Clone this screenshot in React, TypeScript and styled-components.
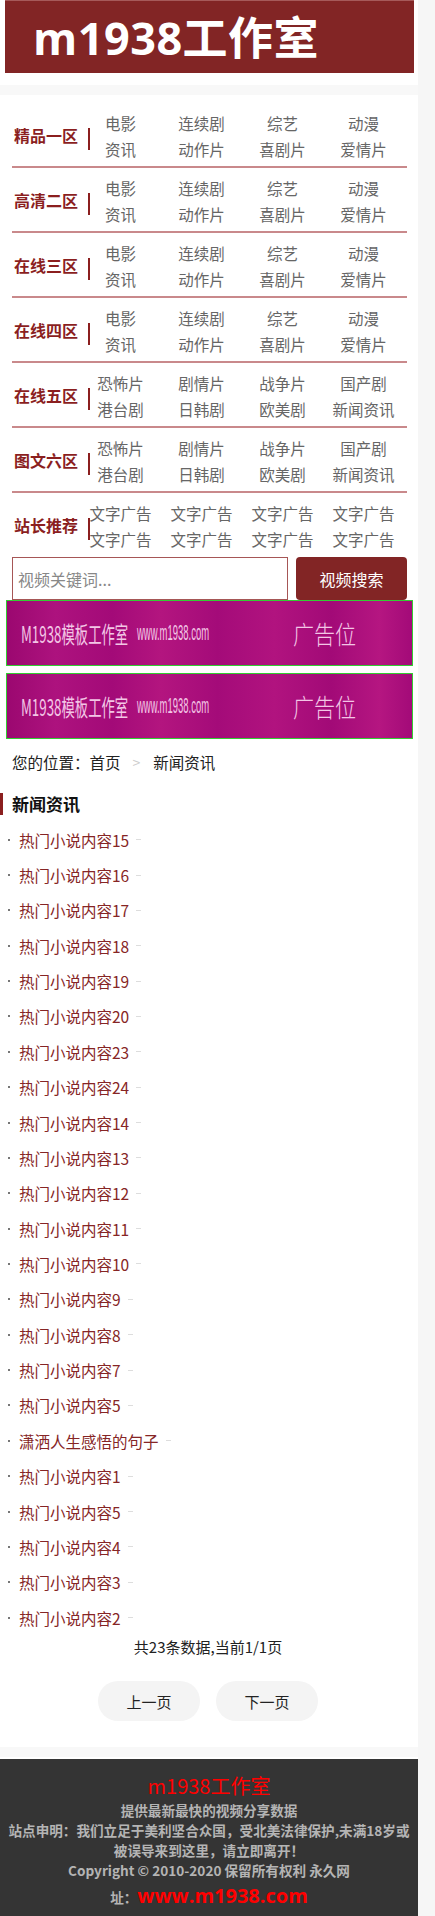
import React from 'react';
import styled, { createGlobalStyle } from 'styled-components';

const GlobalStyle = createGlobalStyle`
  html, body {
    margin: 0;
    padding: 0;
    background: #f6f6f6;
  }
  body {
    font-family: "Noto Sans CJK SC", "Noto Sans", sans-serif;
    color: #333;
  }
  * { box-sizing: border-box; }
  ul { margin: 0; padding: 0; list-style: none; }
`;

const Page = styled.div`
  width: 418px;
  background: #fff;
  min-height: 1916px;
  display: flex;
  flex-direction: column;
`;

const Header = styled.header`
  margin: 0 4px 0 5px;
  height: 73px;
  background: #822525;
  border-top: 1px solid #a65a5a;
  display: flex;
  align-items: center;
  padding-left: 28px;
`;

const Logo = styled.h1`
  margin: 0;
  color: #fff;
  font-family: "Open Sans", "Noto Sans CJK SC", sans-serif;
  font-weight: 700;
  font-size: 45px;
  line-height: 1;
  letter-spacing: 0.5px;
`;

const Band = styled.div`
  height: 10px;
  margin-top: ${p => p.$top || 12}px;
  background: #f8f8f8;
`;

const Nav = styled.nav`
  padding: 8px 11px 0 12px;
`;

const NavRow = styled.div`
  display: flex;
  align-items: center;
  height: ${p => (p.$last ? 63 : 65)}px;
  border-bottom: ${p => (p.$last ? 'none' : '2px solid #c9898b')};
`;

const Label = styled.div`
  position: relative;
  width: 68px;
  padding-left: 2px;
  font-weight: 700;
  font-size: 16px;
  color: #8b1f1f;
  white-space: nowrap;

  &::after {
    content: '';
    position: absolute;
    left: 76px;
    top: calc(50% - 7px);
    width: 2px;
    height: 22px;
    background: #8b1f1f;
  }
`;

const Links = styled.div`
  flex: 1;
  display: grid;
  grid-template-columns: repeat(4, 81px);
  grid-auto-rows: 26px;
  padding-top: 2px;
`;

const NavLink = styled.a`
  text-align: center;
  font-size: 15.5px;
  line-height: 26px;
  color: #666;
  text-decoration: none;
  white-space: nowrap;
`;

const SearchBar = styled.form`
  display: flex;
  gap: 8px;
  padding: 0 11px 0 12px;
  margin-top: 1px;
`;

const SearchInput = styled.input`
  width: 276px;
  height: 43px;
  border: 1px solid #a65656;
  padding: 0 4px 0 5px;
  font-family: "Noto Sans CJK SC", sans-serif;
  font-size: 16px;
  outline: none;
  &::placeholder { color: #888; }
`;

const SearchButton = styled.button`
  width: 111px;
  height: 43px;
  border: none;
  border-radius: 4px;
  background: #822525;
  color: #fff;
  font-family: "Noto Sans CJK SC", sans-serif;
  font-size: 16px;
`;

const Banner = styled.div`
  margin: ${p => p.$gap}px 5px 0 6px;
  height: 66px;
  border: 1px solid #33cc33;
  background: linear-gradient(90deg, #9b0870 0%, #ad127e 12%, #a30a78 26%, #b3157f 38%,
    #a40b79 52%, #b1137f 66%, #a20a77 80%, #b51681 92%, #a30a78 100%);
  display: flex;
  align-items: center;
  color: #f3c6e6;
  white-space: nowrap;
  overflow: hidden;
`;

/* the banner art uses a condensed face, so squeeze the glyphs horizontally */
const BannerBrand = styled.span`
  display: inline-block;
  margin-left: 14px;
  width: 104px;
  font-size: 23px;
  transform: scaleX(0.58);
  transform-origin: left center;
`;

const BannerUrl = styled.span`
  display: inline-block;
  margin-left: 12px;
  width: 72px;
  font-family: "Liberation Sans", sans-serif;
  font-size: 22px;
  transform: scaleX(0.43);
  transform-origin: left center;
`;

const BannerTag = styled.span`
  display: inline-block;
  margin-left: 84px;
  font-size: 25px;
  font-weight: 300;
  transform: scaleX(0.84);
  transform-origin: left center;
`;

const Crumbs = styled.div`
  display: flex;
  align-items: center;
  padding: 12px 12px 0;
  font-size: 15.5px;
  color: #222;
`;

const CrumbArrow = styled.span`
  margin: 0 13px 0 12px;
  color: #ccc;
  font-size: 14px;
`;

const SectionTitle = styled.h2`
  margin: 20px 0 0;
  border-left: 3px solid #8b1f1f;
  padding-left: 9px;
  font-size: 17px;
  font-weight: 700;
  line-height: 22px;
  color: #111;
`;

const NewsList = styled.ul`
  margin-top: 7px !important;
`;

const NewsItem = styled.li`
  display: flex;
  align-items: center;
  height: 35.36px;
  padding-left: 8px;
  font-size: 15.5px;
  white-space: nowrap;

  &::before {
    content: '';
    width: 2px;
    height: 2px;
    margin-right: 9px;
    background: #777;
  }
  &::after {
    content: '';
    width: 5px;
    height: 1px;
    margin-left: 7px;
    background: #ddd;
  }
`;

const NewsLink = styled.a`
  color: #862525;
  text-decoration: none;
`;

const PageInfo = styled.div`
  margin-top: 1px;
  text-align: center;
  font-size: 15px;
  color: #222;
  padding-right: 2px;
`;

const Pager = styled.div`
  display: flex;
  justify-content: center;
  gap: 16px;
  margin-top: 24px;
  padding-right: 2px;
`;

const PagerButton = styled.a`
  width: 102px;
  height: 40px;
  border-radius: 20px;
  background: #f4f4f4;
  display: flex;
  align-items: center;
  justify-content: center;
  font-size: 15px;
  color: #222;
`;

const Footer = styled.footer`
  margin-top: 2px;
  flex: 1;
  background: #343434;
  padding: 14px 0 12px;
  text-align: center;
  color: #b4b4b4;
  font-weight: 700;
  font-size: 13.6px;
  line-height: 20px;
`;

const FooterBrand = styled.div`
  color: #ff0000;
  font-weight: 400;
  font-size: 20px;
  line-height: 26px;
  margin-bottom: 1px;
`;

const FooterLine = styled.div`
  padding: 0 ${p => p.$pad || 0}px;
`;

const FooterSite = styled.div`
  margin-top: 2px;
  line-height: 28px;
`;

const SiteUrl = styled.span`
  color: #ff0000;
  font-family: "Open Sans", sans-serif;
  font-size: 20px;
`;

const zones = [
  { name: '精品一区', links: ['电影', '连续剧', '综艺', '动漫', '资讯', '动作片', '喜剧片', '爱情片'] },
  { name: '高清二区', links: ['电影', '连续剧', '综艺', '动漫', '资讯', '动作片', '喜剧片', '爱情片'] },
  { name: '在线三区', links: ['电影', '连续剧', '综艺', '动漫', '资讯', '动作片', '喜剧片', '爱情片'] },
  { name: '在线四区', links: ['电影', '连续剧', '综艺', '动漫', '资讯', '动作片', '喜剧片', '爱情片'] },
  { name: '在线五区', links: ['恐怖片', '剧情片', '战争片', '国产剧', '港台剧', '日韩剧', '欧美剧', '新闻资讯'] },
  { name: '图文六区', links: ['恐怖片', '剧情片', '战争片', '国产剧', '港台剧', '日韩剧', '欧美剧', '新闻资讯'] },
  { name: '站长推荐', links: Array(8).fill('文字广告') },
];

const news = [
  '热门小说内容15', '热门小说内容16', '热门小说内容17', '热门小说内容18', '热门小说内容19',
  '热门小说内容20', '热门小说内容23', '热门小说内容24', '热门小说内容14', '热门小说内容13',
  '热门小说内容12', '热门小说内容11', '热门小说内容10', '热门小说内容9', '热门小说内容8',
  '热门小说内容7', '热门小说内容5', '潇洒人生感悟的句子', '热门小说内容1', '热门小说内容5',
  '热门小说内容4', '热门小说内容3', '热门小说内容2',
];

function AdBanner({ gap }: { gap: number }) {
  return (
    <Banner $gap={gap}>
      <BannerBrand>M1938模板工作室</BannerBrand>
      <BannerUrl>www.m1938.com</BannerUrl>
      <BannerTag>广告位</BannerTag>
    </Banner>
  );
}

export default function App() {
  return (
    <>
      <GlobalStyle />
      <Page>
        <Header>
          <Logo>m1938工作室</Logo>
        </Header>
        <Band />

        <Nav>
          {zones.map((z, i) => (
            <NavRow key={z.name} $last={i === zones.length - 1}>
              <Label>{z.name}</Label>
              <Links>
                {z.links.map((l, j) => (
                  <NavLink key={j} href="#">{l}</NavLink>
                ))}
              </Links>
            </NavRow>
          ))}
        </Nav>

        <SearchBar onSubmit={e => e.preventDefault()}>
          <SearchInput type="text" placeholder="视频关键词..." />
          <SearchButton type="submit">视频搜索</SearchButton>
        </SearchBar>

        <AdBanner gap={0} />
        <AdBanner gap={7} />

        <Crumbs>
          您的位置：首页<CrumbArrow>&gt;</CrumbArrow>新闻资讯
        </Crumbs>

        <SectionTitle>新闻资讯</SectionTitle>
        <NewsList>
          {news.map((t, i) => (
            <NewsItem key={i}>
              <NewsLink href="#">{t}</NewsLink>
            </NewsItem>
          ))}
        </NewsList>

        <PageInfo>共23条数据,当前1/1页</PageInfo>
        <Pager>
          <PagerButton>上一页</PagerButton>
          <PagerButton>下一页</PagerButton>
        </Pager>

        <Band $top={26} />
        <Footer>
          <FooterBrand>m1938工作室</FooterBrand>
          <FooterLine>提供最新最快的视频分享数据</FooterLine>
          <FooterLine $pad={8}>站点申明：我们立足于美利坚合众国，受北美法律保护,未满18岁或被误导来到这里，请立即离开！</FooterLine>
          <FooterLine>Copyright © 2010-2020 保留所有权利 永久网</FooterLine>
          <FooterSite>址：<SiteUrl>www.m1938.com</SiteUrl></FooterSite>
        </Footer>
      </Page>
    </>
  );
}
